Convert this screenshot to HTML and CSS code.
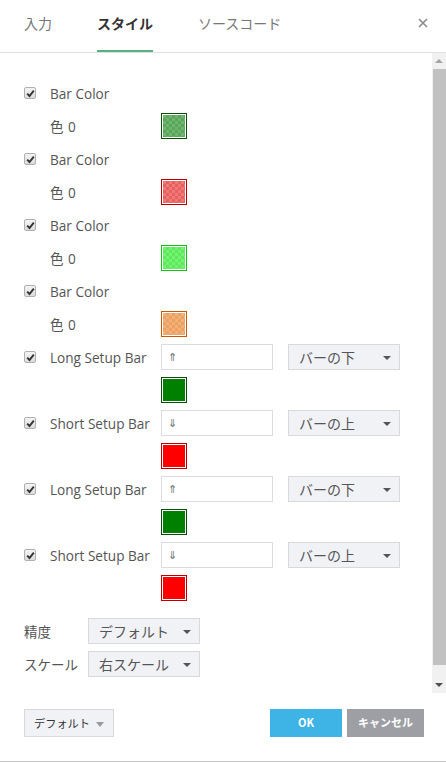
FILE: index.html
```html
<!DOCTYPE html>
<html lang="ja">
<head>
<meta charset="utf-8">
<link rel="stylesheet" href="styles.css">
</head>
<body>
<div class="dialog">
  <div class="header">
    <div class="tab">入力</div>
    <div class="tab active">スタイル</div>
    <div class="tab">ソースコード</div>
    <div class="close">
      <svg width="10" height="10" viewBox="0 0 10 10"><path d="M1 1L9 9M9 1L1 9" stroke="#8a8a8a" stroke-width="1.6"/></svg>
    </div>
  </div>
  <div class="body">
    <div class="content">
      <div class="row"><span class="cbcell"><span class="cb"><svg width="9" height="9" viewBox="0 0 9 9"><path d="M1.2 4.6L3.5 7L7.8 1.6" fill="none" stroke="#333" stroke-width="1.9"/></svg></span></span><span class="lbl">Bar Color</span></div>
      <div class="row"><span class="cbcell"></span><span class="lbl"><span class="jp">色</span> 0</span><span class="sw sw-green"><span class="fill"></span></span></div>
      <div class="row"><span class="cbcell"><span class="cb"><svg width="9" height="9" viewBox="0 0 9 9"><path d="M1.2 4.6L3.5 7L7.8 1.6" fill="none" stroke="#333" stroke-width="1.9"/></svg></span></span><span class="lbl">Bar Color</span></div>
      <div class="row"><span class="cbcell"></span><span class="lbl"><span class="jp">色</span> 0</span><span class="sw sw-red"><span class="fill"></span></span></div>
      <div class="row"><span class="cbcell"><span class="cb"><svg width="9" height="9" viewBox="0 0 9 9"><path d="M1.2 4.6L3.5 7L7.8 1.6" fill="none" stroke="#333" stroke-width="1.9"/></svg></span></span><span class="lbl">Bar Color</span></div>
      <div class="row"><span class="cbcell"></span><span class="lbl"><span class="jp">色</span> 0</span><span class="sw sw-lime"><span class="fill"></span></span></div>
      <div class="row"><span class="cbcell"><span class="cb"><svg width="9" height="9" viewBox="0 0 9 9"><path d="M1.2 4.6L3.5 7L7.8 1.6" fill="none" stroke="#333" stroke-width="1.9"/></svg></span></span><span class="lbl">Bar Color</span></div>
      <div class="row"><span class="cbcell"></span><span class="lbl"><span class="jp">色</span> 0</span><span class="sw sw-orange"><span class="fill"></span></span></div>

      <div class="row"><span class="cbcell"><span class="cb"><svg width="9" height="9" viewBox="0 0 9 9"><path d="M1.2 4.6L3.5 7L7.8 1.6" fill="none" stroke="#333" stroke-width="1.9"/></svg></span></span><span class="lbl">Long Setup Bar</span><span class="input">⇑</span><span class="select wide"><span class="jp">バーの下</span><span class="caret"></span></span></div>
      <div class="row"><span class="cbcell"></span><span class="lbl"></span><span class="sw sw-solid-green"><span class="fill"></span></span></div>
      <div class="row"><span class="cbcell"><span class="cb"><svg width="9" height="9" viewBox="0 0 9 9"><path d="M1.2 4.6L3.5 7L7.8 1.6" fill="none" stroke="#333" stroke-width="1.9"/></svg></span></span><span class="lbl">Short Setup Bar</span><span class="input">⇓</span><span class="select wide"><span class="jp">バーの上</span><span class="caret"></span></span></div>
      <div class="row"><span class="cbcell"></span><span class="lbl"></span><span class="sw sw-solid-red"><span class="fill"></span></span></div>
      <div class="row"><span class="cbcell"><span class="cb"><svg width="9" height="9" viewBox="0 0 9 9"><path d="M1.2 4.6L3.5 7L7.8 1.6" fill="none" stroke="#333" stroke-width="1.9"/></svg></span></span><span class="lbl">Long Setup Bar</span><span class="input">⇑</span><span class="select wide"><span class="jp">バーの下</span><span class="caret"></span></span></div>
      <div class="row"><span class="cbcell"></span><span class="lbl"></span><span class="sw sw-solid-green"><span class="fill"></span></span></div>
      <div class="row"><span class="cbcell"><span class="cb"><svg width="9" height="9" viewBox="0 0 9 9"><path d="M1.2 4.6L3.5 7L7.8 1.6" fill="none" stroke="#333" stroke-width="1.9"/></svg></span></span><span class="lbl">Short Setup Bar</span><span class="input">⇓</span><span class="select wide"><span class="jp">バーの上</span><span class="caret"></span></span></div>
      <div class="row"><span class="cbcell"></span><span class="lbl"></span><span class="sw sw-solid-red"><span class="fill"></span></span></div>

      <div class="row first-opt"><span class="optlbl jp">精度</span><span class="select wide"><span class="jp">デフォルト</span><span class="caret"></span></span></div>
      <div class="row"><span class="optlbl jp">スケール</span><span class="select wide"><span class="jp">右スケール</span><span class="caret"></span></span></div>
    </div>
    <div class="scrollbar">
      <div class="arrow up"></div>
      <div class="thumb"></div>
      <div class="arrow down"></div>
    </div>
  </div>
  <div class="footer">
    <div class="defbtn"><span>デフォルト</span><span class="caret light"></span></div>
    <div class="spacer"></div>
    <div class="btn ok">OK</div>
    <div class="btn cancel">キャンセル</div>
  </div>
</div>
</body>
</html>
```

FILE: styles.css
```css
html, body {
  margin: 0;
  padding: 0;
  background: #fff;
}
body {
  font-family: "Open Sans", "Noto Sans CJK JP", sans-serif;
  color: #555;
}
.dialog {
  width: 446px;
  height: 761px;
  display: flex;
  flex-direction: column;
  border-bottom: 1px solid #c6c6c6;
}
.jp {
  font-family: "Noto Sans CJK JP", sans-serif;
}
.header {
  height: 52px;
  border-bottom: 1px solid #e0e0e0;
  display: flex;
  align-items: stretch;
  padding-left: 24px;
  box-sizing: content-box;
  font-family: "Noto Sans CJK JP", sans-serif;
}
.tab {
  font-size: 14px;
  color: #777;
  margin-right: 45px;
  display: flex;
  align-items: center;
  border-bottom: 2px solid transparent;
  padding-bottom: 4px;
  box-sizing: border-box;
  height: 52px;
}
.tab.active {
  color: #333;
  font-weight: bold;
  border-bottom-color: #53b27f;
}
.close {
  margin-left: auto;
  margin-right: 18px;
  display: flex;
  align-items: center;
  padding-bottom: 6px;
}
.body {
  flex: 1;
  display: flex;
  min-height: 0;
}
.content {
  flex: 1;
  padding: 27px 0 0 24px;
  display: flex;
  flex-direction: column;
  gap: 7px;
}
.row {
  height: 26px;
  display: flex;
  align-items: center;
}
.row.first-opt {
  margin-top: 10px;
}
.cbcell {
  width: 26px;
  display: flex;
  align-items: center;
}
.cb {
  width: 10px;
  height: 10px;
  border: 1px solid #b0b0b0;
  border-radius: 2px;
  background: linear-gradient(#f4f4f4, #dcdcdc);
  display: flex;
  align-items: center;
  justify-content: center;
}
.cb svg {
  display: block;
}
.lbl {
  width: 111px;
  font-size: 13.6px;
  color: #555;
  white-space: nowrap;
}
.lbl .jp {
  font-size: 13.5px;
  margin-right: 1px;
}
.optlbl {
  width: 64px;
  font-size: 13.5px;
  color: #555;
  white-space: nowrap;
}
.sw {
  border: 1px solid;
  padding: 1px;
  box-sizing: border-box;
  width: 26px;
  height: 26px;
  background: #fff;
  display: block;
}
.sw .fill {
  display: block;
  width: 100%;
  height: 100%;
}
.sw-green { border-color: #0d4d0d; }
.sw-green .fill {
  background: repeating-conic-gradient(#5aa55a 0 25%, #6db66d 0 50%) 0 0 / 6px 6px;
}
.sw-red { border-color: #b40000; }
.sw-red .fill {
  background: repeating-conic-gradient(#e66060 0 25%, #f27777 0 50%) 0 0 / 6px 6px;
}
.sw-lime { border-color: #18c018; }
.sw-lime .fill {
  background: repeating-conic-gradient(#5ee85e 0 25%, #72f472 0 50%) 0 0 / 6px 6px;
}
.sw-orange { border-color: #c65a0f; }
.sw-orange .fill {
  background: repeating-conic-gradient(#eca062 0 25%, #f3b077 0 50%) 0 0 / 6px 6px;
}
.sw-solid-green { border-color: #0a4a0a; }
.sw-solid-green .fill { background: #008000; }
.sw-solid-red { border-color: #b40000; }
.sw-solid-red .fill { background: #ff0000; }

.input {
  width: 112px;
  height: 26px;
  box-sizing: border-box;
  border: 1px solid #dcdcdc;
  background: #fff;
  font-size: 11px;
  color: #666;
  padding-left: 6px;
  display: flex;
  align-items: center;
  font-family: "DejaVu Sans", sans-serif;
  margin-right: 15px;
}
.select {
  height: 26px;
  box-sizing: border-box;
  border: 1px solid #d9d9d9;
  background: #f1f2f6;
  display: flex;
  align-items: center;
  padding: 0 8px 0 10px;
  font-size: 14px;
  color: #555;
}
.select.wide {
  width: 112px;
}
.caret {
  margin-left: auto;
  width: 0;
  height: 0;
  border-left: 4px solid transparent;
  border-right: 4px solid transparent;
  border-top: 4px solid #555;
  margin-top: 2px;
}
.caret.light {
  border-top-color: #9a9a9a;
  border-left-width: 4.5px;
  border-right-width: 4.5px;
  border-top-width: 5px;
  margin-left: 6px;
}
.scrollbar {
  width: 14px;
  background: #f1f1f1;
  display: flex;
  flex-direction: column;
}
.arrow {
  height: 16px;
  display: flex;
  align-items: center;
  justify-content: center;
}
.arrow::before {
  content: "";
  width: 0;
  height: 0;
  border-left: 4px solid transparent;
  border-right: 4px solid transparent;
}
.arrow.up::before {
  border-bottom: 4px solid #a3a3a3;
}
.arrow.down::before {
  border-top: 4px solid #505050;
}
.thumb {
  flex: 1;
  background: #c1c1c1;
  margin: 0 0 12px 1px;
}
.footer {
  height: 68px;
  display: flex;
  align-items: flex-start;
  padding: 16px 22px 0 24px;
  box-sizing: border-box;
  font-family: "Noto Sans CJK JP", sans-serif;
}
.defbtn {
  width: 90px;
  height: 28px;
  box-sizing: border-box;
  border: 1px solid #d9d9d9;
  background: #f1f2f6;
  display: flex;
  align-items: center;
  padding-left: 9px;
  font-size: 11.2px;
  color: #333;
}
.spacer {
  flex: 1;
}
.btn {
  height: 28px;
  display: flex;
  align-items: center;
  justify-content: center;
  color: #fff;
  font-weight: bold;
  font-size: 11px;
  padding-bottom: 2px;
  box-sizing: border-box;
}
.btn.ok {
  width: 72px;
  background: #3db4e5;
  margin-right: 5px;
}
.btn.cancel {
  width: 77px;
  background: #9d9fa4;
}
```
